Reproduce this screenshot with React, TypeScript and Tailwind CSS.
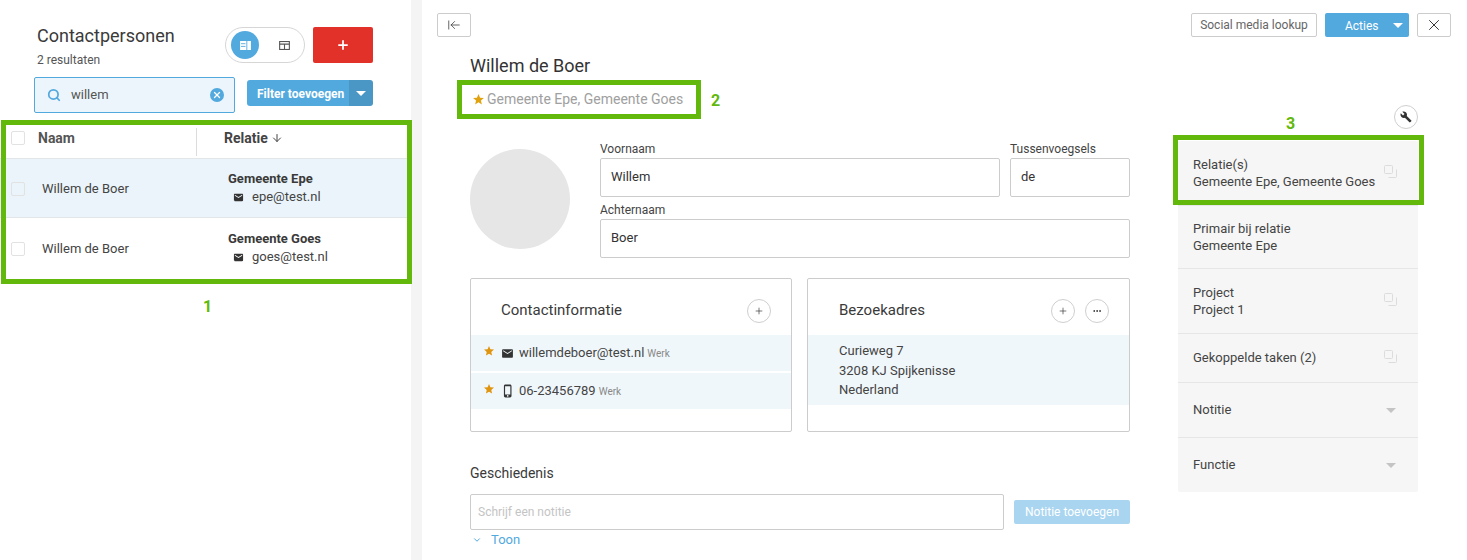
import React from "react";
import { ArrowDown, ArrowLeftToLine, ChevronDown, Ellipsis, Plus, Search, X } from "lucide-react";

const MailIcon = ({ className }: { className?: string }) => (
  <svg viewBox="0 0 24 24" className={className} fill="currentColor">
    <path d="M20 4H4c-1.1 0-1.99.9-1.99 2L2 18c0 1.1.9 2 2 2h16c1.1 0 2-.9 2-2V6c0-1.1-.9-2-2-2zm0 4l-8 5-8-5V6l8 5 8-5v2z" />
  </svg>
);

const StarIcon = ({ className }: { className?: string }) => (
  <svg viewBox="0 0 24 24" className={className} fill="currentColor">
    <path d="M12 17.27L18.18 21l-1.64-7.03L22 9.24l-7.19-.61L12 2 9.19 8.63 2 9.24l5.46 4.73L5.82 21z" />
  </svg>
);

const PhoneIcon = ({ className }: { className?: string }) => (
  <svg viewBox="0 0 24 24" className={className} fill="currentColor">
    <path d="M15.5 1h-8C6.12 1 5 2.12 5 3.5v17C5 21.88 6.12 23 7.5 23h8c1.38 0 2.5-1.12 2.5-2.5v-17C18 2.12 16.88 1 15.5 1zm-4 21c-.83 0-1.5-.67-1.5-1.5s.67-1.5 1.5-1.5 1.5.67 1.5 1.5-.67 1.5-1.5 1.5zm4.5-4H7V4h9v14z" />
  </svg>
);

const WrenchIcon = ({ className }: { className?: string }) => (
  <svg viewBox="0 0 24 24" className={className} fill="currentColor">
    <path d="M22.7 19l-9.1-9.1c.9-2.3.4-5-1.5-6.9-2-2-5-2.4-7.4-1.3L9 6 6 9 1.6 4.7C.4 7.1.9 10.1 2.9 12.1c1.9 1.9 4.6 2.4 6.9 1.5l9.1 9.1c.4.4 1 .4 1.4 0l2.3-2.3c.5-.4.5-1.1.1-1.4z" />
  </svg>
);

const CopyIcon = () => (
  <svg viewBox="0 0 13 13" className="w-[13px] h-[13px] -mt-[4px] text-[#dcdcdc]" fill="none" stroke="currentColor" strokeWidth="1">
    <rect x="0.5" y="0.5" width="8" height="8" rx="1" />
    <path d="M12.5 4.5v7a1 1 0 0 1-1 1h-7" />
  </svg>
);

const Caret = ({ className }: { className: string }) => (
  <span className={`w-0 h-0 border-x-[5px] border-x-transparent border-t-[5px] ${className}`} />
);

const CircleButton = ({ children }: { children: React.ReactNode }) => (
  <span className="flex items-center justify-center w-6 h-6 rounded-full border border-[#cfcfcf] bg-white text-[#333]">
    {children}
  </span>
);

const Field = ({ label, value, className }: { label: string; value: string; className: string }) => (
  <div className={className}>
    <div className="text-xs leading-[18px] text-[#444] h-[18px]">{label}</div>
    <div className="flex items-center h-[39px] px-[10px] pb-[2px] border border-[#ccc] rounded-[2px] text-[13px] text-[#333]">{value}</div>
  </div>
);

const Row = ({
  relation,
  email,
  className,
  cellClassName,
}: {
  relation: string;
  email: string;
  className: string;
  cellClassName: string;
}) => (
  <div className={`flex ${className}`}>
    <div className="flex items-center w-[228px] pl-[11px] pt-[2px]">
      <span className="w-[14px] h-[14px] rounded-[2px] border border-[#e2e2e2]" />
      <span className="ml-[17px] text-[13px] text-[#444]">Willem de Boer</span>
    </div>
    <div className={cellClassName}>
      <div className="text-[13px] leading-[18px] font-bold text-[#3a3a3a]">{relation}</div>
      <div className="flex items-center h-[18px] pl-[5px] text-[13px] text-[#444]">
        <MailIcon className="w-[11px] h-[11px] text-[#333]" />
        <span className="ml-[8px]">{email}</span>
      </div>
    </div>
  </div>
);

const SideItem = ({
  title,
  value,
  height,
  icon,
}: {
  title: string;
  value?: string;
  height: string;
  icon?: "copy" | "caret";
}) => (
  <div className={`flex items-center justify-between pl-[15px] pr-[21px] border-b border-[#e6e6e6] last:border-b-0 ${height}`}>
    <div className={`text-[13px] leading-[17px] text-[#444] ${value ? "" : "-mt-[2px]"}`}>
      <div>{title}</div>
      {value && <div>{value}</div>}
    </div>
    {icon === "copy" && <CopyIcon />}
    {icon === "caret" && <Caret className="border-t-[#c4c4c4] mr-[1px]" />}
  </div>
);

export default function App() {
  return (
    <div className="relative flex w-full h-[560px] overflow-hidden bg-[#f4f4f4] font-['Roboto',sans-serif]">
      {/* linker kolom */}
      <div className="w-[411px] h-full bg-white shrink-0">
        <div className="flex justify-between h-[77px] pl-[37px] pr-[38px] pt-[27px]">
          <div>
            <div className="text-lg leading-[18px] text-[#3a3a3a]">Contactpersonen</div>
            <div className="mt-[8px] text-xs leading-[15px] text-[#555]">2 resultaten</div>
          </div>
          <div className="flex gap-2">
            <div className="flex items-center w-[80px] h-[36px] pl-[5px] rounded-full border border-[#d6d6d6]">
              <span className="flex items-center justify-center w-[28px] h-[28px] rounded-full bg-[#52a9de]">
                <svg viewBox="0 0 12 10" className="w-[11px] h-[9px]" fill="white">
                  <path d="M0 0h7v10H0zM8 0h4v10H8z" />
                  <path d="M1 3h5M1 6h5" stroke="#52a9de" strokeWidth="1" />
                </svg>
              </span>
              <svg viewBox="0 0 12 10" className="ml-[20px] w-[11px] h-[9px]" fill="none" stroke="#555" strokeWidth="1.2">
                <rect x="0.6" y="0.6" width="10.8" height="8.8" />
                <path d="M0.6 3.5h10.8M6 3.5v6" />
              </svg>
            </div>
            <span className="flex items-center justify-center w-[60px] h-[36px] rounded-[2px] bg-[#e13128] text-white">
              <Plus className="w-[14px] h-[14px]" strokeWidth={3} />
            </span>
          </div>
        </div>

        <div className="flex items-start justify-between h-[48px] pl-[34px] pr-[38px]">
          <div className="flex items-center w-[201px] h-[36px] pl-[12px] pr-[10px] rounded-[2px] border border-[#52a9de] bg-[#ecf5fb]">
            <Search className="w-[14px] h-[14px] text-[#52a9de]" strokeWidth={3} />
            <span className="ml-[10px] flex-1 text-[13px] text-[#555]">willem</span>
            <span className="flex items-center justify-center w-[14px] h-[14px] rounded-full bg-[#52a9de] text-white">
              <X className="w-[10px] h-[10px]" strokeWidth={3} />
            </span>
          </div>
          <div className="flex mt-[3px] h-[26px] rounded-[3px] overflow-hidden text-white">
            <span className="flex items-center w-[102px] pl-[10px] pt-[2px] bg-[#52a9de] text-xs font-bold whitespace-nowrap">Filter toevoegen</span>
            <span className="flex items-center justify-center w-[24px] bg-[#4a96c4]">
              <Caret className="border-t-white" />
            </span>
          </div>
        </div>

        {/* tabel */}
        <div className="flex items-center h-[34px] pb-[8px] border-b border-[#e3e6e8] text-sm font-bold text-[#555]">
          <span className="ml-[11px] w-[14px] h-[14px] rounded-[2px] border border-[#e2e2e2]" />
          <span className="ml-[13px] w-[158px]">Naam</span>
          <span className="w-px h-[28px] mt-[8px] bg-[#dcdcdc]" />
          <span className="ml-[27px] text-[#444]">Relatie</span>
          <ArrowDown className="ml-[3px] w-[12px] h-[12px] text-[#444]" strokeWidth={2} />
        </div>
        <Row relation="Gemeente Epe" email="epe@test.nl" className="h-[59px] border-b border-[#e3e6e8] bg-[#ebf4fa]" cellClassName="pt-[11px]" />
        <Row relation="Gemeente Goes" email="goes@test.nl" className="h-[60px] bg-white" cellClassName="pt-[12px]" />
      </div>

      {/* detail */}
      <div className="flex-1 ml-[11px] mr-[1px] bg-white pl-[15px] pr-[16px] pt-[13px]">
        <div className="flex items-center justify-between">
          <span className="flex items-center justify-center w-[34px] h-[24px] rounded-[2px] border border-[#ccc] text-[#444]">
            <ArrowLeftToLine className="w-[14px] h-[14px]" strokeWidth={1.4} />
          </span>
          <div className="flex gap-2 text-xs">
            <span className="flex items-center justify-center w-[126px] h-[24px] rounded-[2px] border border-[#ccc] text-[#666]">Social media lookup</span>
            <span className="flex items-center w-[84px] h-[24px] pl-[20px] pt-[1px] rounded-[2px] bg-[#52a9de] text-white">
              Acties
              <Caret className="ml-[14px] border-t-white" />
            </span>
            <span className="flex items-center justify-center w-[34px] h-[24px] rounded-[2px] border border-[#ccc] text-[#333]">
              <X className="w-[18px] h-[18px]" strokeWidth={1.3} />
            </span>
          </div>
        </div>

        <div className="flex pl-[33px] pr-[33px]">
          <div className="w-[660px]">
            <div className="mt-[18px] text-lg leading-[22px] text-[#333]">Willem de Boer</div>
            <div className="flex items-center h-[20px] mt-[12px] pl-[2px] text-sm text-[#a0a0a0]">
              <StarIcon className="w-[13px] h-[13px] text-[#e0a20f]" />
              <span className="ml-[2px]">Gemeente Epe, Gemeente Goes</span>
            </div>

            <div className="flex mt-[30px]">
              <div className="w-[100px] h-[100px] mt-[10px] rounded-full bg-[#e6e6e6] shrink-0" />
              <div className="ml-[30px] flex-1">
                <div className="flex gap-[10px]">
                  <Field label="Voornaam" value="Willem" className="w-[400px] mt-[1px]" />
                  <Field label="Tussenvoegsels" value="de" className="w-[120px] mt-[1px]" />
                </div>
                <Field label="Achternaam" value="Boer" className="mt-[4px]" />
              </div>
            </div>

            <div className="flex gap-[15px] mt-[20px]">
              <div className="w-[322px] h-[154px] rounded-[2px] border border-[#ccc]">
                <div className="flex items-center justify-between h-[56px] pt-[8px] pl-[30px] pr-[20px]">
                  <span className="-mt-[2px] text-[15px] text-[#3a3a3a]">Contactinformatie</span>
                  <CircleButton>
                    <Plus className="w-[10px] h-[10px]" strokeWidth={1.6} />
                  </CircleButton>
                </div>
                <div className="flex items-center h-[36px] pl-[12px] bg-[#f0f7fb] text-[13px] text-[#444]">
                  <StarIcon className="w-[12px] h-[12px] -mt-[4px] text-[#e0950f]" />
                  <MailIcon className="ml-[6px] w-[13px] h-[13px] text-[#333]" />
                  <span className="ml-[5px]">willemdeboer@test.nl</span>
                  <span className="ml-[3px] text-[10px] text-[#888]">Werk</span>
                </div>
                <div className="flex items-center h-[36px] mt-[2px] pl-[12px] bg-[#f0f7fb] text-[13px] text-[#444]">
                  <StarIcon className="w-[12px] h-[12px] -mt-[4px] text-[#e0950f]" />
                  <PhoneIcon className="ml-[6px] w-[14px] h-[14px] text-[#333]" />
                  <span className="ml-[4px]">06-23456789</span>
                  <span className="ml-[3px] text-[10px] text-[#888]">Werk</span>
                </div>
              </div>

              <div className="w-[323px] h-[154px] rounded-[2px] border border-[#ccc]">
                <div className="flex items-center justify-between h-[56px] pt-[8px] pl-[31px] pr-[20px]">
                  <span className="-mt-[2px] text-[15px] text-[#3a3a3a]">Bezoekadres</span>
                  <div className="flex gap-[10px]">
                    <CircleButton>
                      <Plus className="w-[10px] h-[10px]" strokeWidth={1.6} />
                    </CircleButton>
                    <CircleButton>
                      <Ellipsis className="w-[10px] h-[10px]" strokeWidth={2.4} />
                    </CircleButton>
                  </div>
                </div>
                <div className="h-[70px] pl-[31px] pt-[6px] bg-[#f0f7fb] text-[13px] leading-[19.5px] text-[#444]">
                  <div>Curieweg 7</div>
                  <div>3208 KJ Spijkenisse</div>
                  <div>Nederland</div>
                </div>
              </div>
            </div>

            <div className="mt-[32px] text-sm leading-[18px] text-[#3a3a3a]">Geschiedenis</div>
            <div className="flex items-center gap-[10px] mt-[12px]">
              <div className="flex items-center w-[534px] h-[36px] pl-[7px] rounded-[2px] border border-[#ccc] text-xs text-[#c4c4c4]">Schrijf een notitie</div>
              <span className="flex items-center justify-center w-[116px] h-[24px] rounded-[2px] bg-[#a9d5f0] text-xs text-white">Notitie toevoegen</span>
            </div>
            <div className="flex items-center h-[18px] mt-[1px] pl-[2px] text-[13px] text-[#52a9de]">
              <ChevronDown className="w-[10px] h-[10px]" strokeWidth={2.4} />
              <span className="ml-[9px]">Toon</span>
            </div>
          </div>

          {/* zijkolom */}
          <div className="ml-[48px] w-[240px]">
            <div className="flex justify-end mt-[68px]">
              <CircleButton>
                <WrenchIcon className="w-[12px] h-[12px]" />
              </CircleButton>
            </div>
            <div className="mt-[12px] rounded-[2px] bg-[#f6f6f6]">
              <SideItem title="Relatie(s)" value="Gemeente Epe, Gemeente Goes" icon="copy" height="h-[65px]" />
              <SideItem title="Primair bij relatie" value="Gemeente Epe" height="h-[63px]" />
              <SideItem title="Project" value="Project 1" icon="copy" height="h-[65px]" />
              <SideItem title="Gekoppelde taken (2)" icon="copy" height="h-[49px]" />
              <SideItem title="Notitie" icon="caret" height="h-[55px]" />
              <SideItem title="Functie" icon="caret" height="h-[54px]" />
            </div>
          </div>
        </div>
      </div>

      {/* annotaties */}
      <div className="absolute left-[1px] top-[120px] w-[411px] h-[164px] border-[5px] border-[#62b80b]" />
      <div className="absolute left-[457px] top-[80px] w-[244px] h-[39px] border-[5px] border-[#62b80b]" />
      <div className="absolute left-[1173px] top-[135px] w-[251px] h-[70px] border-[5px] border-[#62b80b]" />
      <span className="absolute left-[203px] top-[298px] text-base leading-[18px] font-bold text-[#62b80b]">1</span>
      <span className="absolute left-[711px] top-[92px] text-base leading-[18px] font-bold text-[#62b80b]">2</span>
      <span className="absolute left-[1286px] top-[115px] text-base leading-[18px] font-bold text-[#62b80b]">3</span>
    </div>
  );
}
